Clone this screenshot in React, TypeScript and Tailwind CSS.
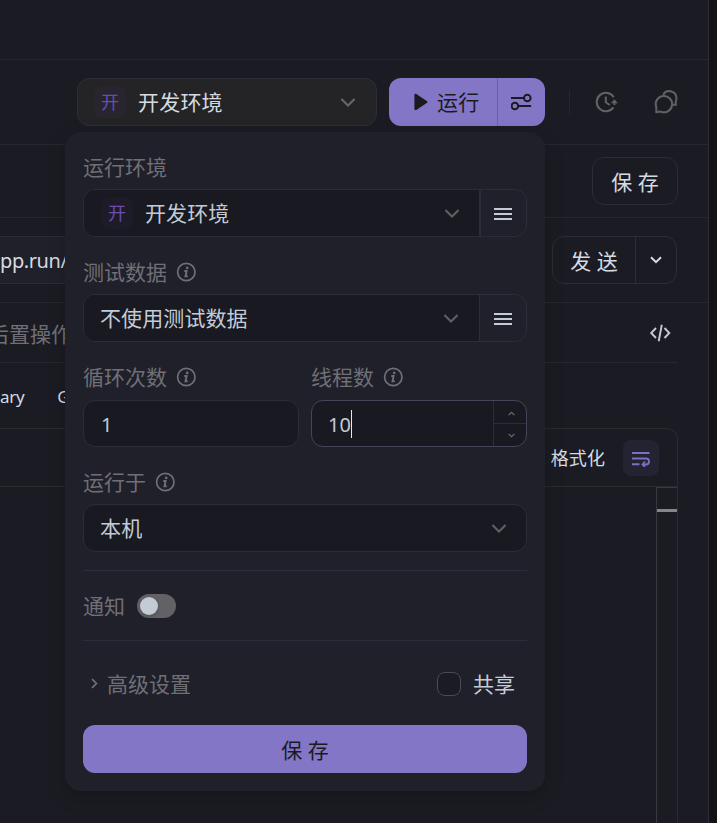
import type { ReactNode } from "react";

function ChevronDown({ className = "" }: { className?: string }) {
  return (
    <svg
      viewBox="0 0 16 10"
      fill="none"
      stroke="currentColor"
      strokeWidth={2.3}
      overflow="visible"
      className={className}
    >
      <path d="M.5 1l7.500 7.500L15.500 1" />
    </svg>
  );
}

function SmallChevron({ className = "" }: { className?: string }) {
  return (
    <svg viewBox="0 0 12 8" fill="none" stroke="currentColor" strokeWidth={2} className={className}>
      <path d="M1 1.200l5 5 5-5" />
    </svg>
  );
}

function InfoIcon() {
  return (
    <svg viewBox="0 0 20 20" fill="none" className="w-5 h-5 text-[#6f6f75]">
      <circle cx="10.3" cy="10" r="8.7" stroke="currentColor" strokeWidth={1.7} />
      <circle cx="11.2" cy="5.9" r="1.3" fill="currentColor" />
      <path d="M8.300 9h2.300L9.500 14.200h2.200" stroke="currentColor" strokeWidth={1.9} />
    </svg>
  );
}

function MenuIcon() {
  return (
    <svg viewBox="0 0 18 12" fill="currentColor" className="w-[18px] h-3 mt-0.5">
      <rect width="18" height="2" />
      <rect y="5" width="18" height="2" />
      <rect y="10" width="18" height="2" />
    </svg>
  );
}

function Label({ children, info }: { children: ReactNode; info?: boolean }) {
  return (
    <div className="flex items-center gap-[9px] h-[42px] pb-0.5 text-[#6f6f75]">
      <span>{children}</span>
      {info && <InfoIcon />}
    </div>
  );
}

function EnvBadge({ className = "" }: { className?: string }) {
  return (
    <span className={`flex items-center justify-center w-8 h-8 rounded-lg text-lg text-[#6a4bb0] ${className}`}>
      开
    </span>
  );
}

function MenuButton({ className = "" }: { className?: string }) {
  return (
    <button
      className={`flex items-center justify-center w-[47px] border-[#2d2d39] text-[#c3ccd6] ${className}`}
    >
      <MenuIcon />
    </button>
  );
}

function RunPanel() {
  return (
    <div className="absolute left-[65px] top-[132px] w-[480px] h-[659px] px-[18px] pt-[15px] rounded-2xl bg-[#20202a] shadow-[0_6px_20px_rgba(0,0,0,0.2)]">
      <Label>运行环境</Label>
      <div className="flex h-12 border border-[#2d2d39] rounded-xl overflow-hidden">
        <div className="flex-1 flex items-center bg-[#191921] pl-[17px] pr-5">
          <EnvBadge className="bg-[#1d1b28]" />
          <span className="ml-3 text-[#c3ccd6] tracking-[0.1px]">开发环境</span>
          <ChevronDown className="ml-auto w-3.5 h-[9px] text-[#5f5f66]" />
        </div>
        <MenuButton className="border-l-2 pr-0.5" />
      </div>

      <div className="mt-[15px]">
        <Label info>测试数据</Label>
        <div className="flex h-12 border border-[#2d2d39] rounded-xl overflow-hidden">
          <div className="flex-1 flex items-center bg-[#191921] pl-4 pr-[21px]">
            <span className="text-[#c3ccd6] tracking-[0.1px]">不使用测试数据</span>
            <ChevronDown className="ml-auto w-3.5 h-[9px] text-[#5f5f66]" />
          </div>
          <MenuButton className="border-l" />
        </div>
      </div>

      <div className="flex gap-3 mt-[15px]">
        <div className="w-[216px]">
          <Label info>循环次数</Label>
          <div className="flex items-center h-[47px] mt-px pl-[17px] pt-0.5 border border-[#2d2d39] rounded-xl bg-[#191921] text-xl text-[#c3ccd6]">
            1
          </div>
        </div>
        <div className="w-[216px]">
          <Label info>线程数</Label>
          <div className="flex h-[47px] mt-px border border-[#45455a] rounded-xl bg-[#191921] overflow-hidden">
            <div className="flex-1 flex items-center pl-4 text-xl text-[#c3ccd6]">
              <span className="pt-0.5">10</span>
              <span className="w-px h-7 bg-[#e4e8ec]" />
            </div>
            <div className="flex flex-col w-[33px] border-l border-[#2d2d39] text-[#6a6a70]">
              <div className="h-[23px] flex items-center justify-center pt-0.5 pl-0.5 border-b border-[#2d2d39]">
                <SmallChevron className="w-[7px] h-[5px] rotate-180" />
              </div>
              <div className="flex-1 flex items-center justify-center pl-0.5">
                <SmallChevron className="w-[7px] h-[5px]" />
              </div>
            </div>
          </div>
        </div>
      </div>

      <div className="mt-[15px]">
        <Label info>运行于</Label>
        <div className="flex items-center h-12 pl-4 pr-5 border border-[#2d2d39] rounded-xl bg-[#191921] text-[#c3ccd6]">
          <span className="tracking-[0.2px]">本机</span>
          <ChevronDown className="ml-auto w-3.5 h-[9px] text-[#5f5f66]" />
        </div>
      </div>

      <div className="flex items-center gap-3 h-[71px] mt-[18px] border-y border-[#2d2d39] text-[#6f6f75]">
        通知
        <span className="flex items-center w-[39px] h-6 px-[3px] rounded-full bg-[#626266]">
          <span className="w-[18px] h-[18px] rounded-full bg-[#c3ccd6] shadow-[0_2px_4px_rgba(0,35,11,0.2)]" />
        </span>
      </div>

      <div className="flex items-center h-[84px] pt-0.5">
        <SmallChevron className="w-[11px] h-[7px] ml-1.5 mb-0.5 -rotate-90 text-[#6f6f75]" />
        <span className="ml-[7px] text-[#6f6f75]">高级设置</span>
        <span className="ml-auto w-6 h-6 border border-[#4a4a5c] rounded-lg bg-[#1b1b23]" />
        <span className="mx-3 text-[#c3ccd6]">共享</span>
      </div>

      <button className="w-full h-12 pt-0.5 rounded-xl bg-[#8376c6] text-[#1b1b1f]">保 存</button>
    </div>
  );
}

function Toolbar() {
  return (
    <div className="flex items-center h-[85px] pl-[77px] border-b border-[#272731]">
      <div className="flex items-center w-[300px] h-12 pl-4 pr-[21px] border border-[#2d2d39] rounded-xl bg-[#242427]">
        <EnvBadge className="bg-[#28252f]" />
        <span className="ml-3 tracking-[0.2px]">开发环境</span>
        <ChevronDown className="ml-auto w-3.5 h-[9px] text-[#66666b]" />
      </div>
      <div className="flex h-12 ml-3 rounded-xl bg-[#8376c6] text-[#1b1b1f]">
        <button className="flex items-center w-[108px] pl-[25px]">
          <svg viewBox="0 0 14 18" fill="currentColor" className="w-3.5 h-[18px]">
            <path d="M.4 2.200C.4.800 1.600.400 2.700 1.200l10 6.700c1 .7 1 1.500 0 2.200l-10 6.700C1.600 17.600.4 17.200.4 15.800z" />
          </svg>
          <span className="ml-[9px] tracking-[0.2px]">运行</span>
        </button>
        <button className="flex items-center justify-center w-12 border-l border-[#6c61a8]">
          <svg viewBox="0 0 21 18" fill="none" stroke="currentColor" strokeWidth={2} className="w-[21px] h-[18px]">
            <circle cx="16.300" cy="5" r="3.300" />
            <circle cx="3.900" cy="13" r="3.300" />
            <path d="M0 5h13M7.200 13h12.900" />
          </svg>
        </button>
      </div>
      <span className="w-px h-6 ml-6 bg-[#272731]" />
      {/* Run history */}
      <svg viewBox="0 0 24 24" fill="none" stroke="#616166" strokeWidth={2} className="w-6 h-6 ml-6">
        <path d="M19.800 7.300A9.200 9.200 0 1 0 19.400 17.400" />
        <path d="M11.800 6.500v5.800l3.900 2.700" />
        <path d="M20.400 15V12" />
        <path d="M16.900 13.300L20.400 9.200l3.500 4.100z" fill="#616166" stroke="none" />
      </svg>
      {/* Comments */}
      <svg
        viewBox="0 0 24 24"
        fill="none"
        stroke="#616166"
        strokeWidth={2}
        strokeLinejoin="round"
        className="w-6 h-6 ml-9"
      >
        <path d="M2.300 22.300v-5.200A8.200 8.200 0 1 1 6.600 21.600z" />
        <path d="M9.200 4.700A7.100 7.100 0 0 1 22.400 8.800c0 1.400-.4 2.500-.8 3.300l.3 2.700h-3" />
      </svg>
    </div>
  );
}

export default function App() {
  return (
    <div
      lang="zh-CN"
      className="relative flex w-[717px] h-[823px] overflow-hidden bg-[#141417] text-[21px] leading-7 whitespace-nowrap font-['Noto_Sans','Noto_Sans_CJK_SC',sans-serif]"
    >
      <div className="flex flex-col w-[709px] border-r border-[#2d2d39] bg-[#1b1b23] text-[#d5dbe1]">
        <div className="h-[60px] border-b border-[#272731]" />
        <Toolbar />

        <div className="flex items-center justify-end h-[73px] pr-[30px] border-b border-[#272731]">
          <button className="w-[86px] h-12 pt-0.5 border border-[#2d2d39] rounded-xl">保 存</button>
        </div>

        <div className="flex items-center justify-between h-[85px] pr-[31px] border-b border-[#272731]">
          <div className="flex items-center w-[400px] h-12 pt-0.5 border-y border-[#2d2d39] bg-[#20202a] text-xl tracking-[-0.4px]">
            pp.run/
          </div>
          <div className="flex w-[125px] h-12 border border-[#2d2d39] rounded-xl">
            <button className="w-[82px] pt-0.5">发 送</button>
            <button className="flex-1 flex items-center justify-center border-l border-[#2d2d39]">
              <SmallChevron className="w-3 h-2" />
            </button>
          </div>
        </div>

        <div className="flex items-center justify-between h-[60px] mr-[30px] pr-[7px] border-b border-[#272731]">
          <span className="-ml-3 pt-0.5 text-[#6f6f75]">后置操作</span>
          <svg viewBox="0 0 22 18" fill="none" stroke="#c3ccd6" strokeWidth={1.9} className="w-[22px] h-[18px]">
            <path d="M7 4L2.200 9 7 14M15.500 4l4.800 5-4.800 5M12.800.800L9.700 17.200" />
          </svg>
        </div>

        <div className="flex items-center gap-[33px] h-[65px] pt-0.5 text-[17px] tracking-[-0.3px]">
          <span>ary</span>
          <span>G</span>
        </div>

        <div className="flex-1 flex flex-col mr-[30px] border-t border-r border-[#2a2a30] rounded-tr-xl">
          <div className="flex items-center justify-end h-[58px] pr-[18px] border-b border-[#2a2a30] text-lg">
            <span className="tracking-[0.1px]">格式化</span>
            <span className="flex items-center justify-center w-9 h-9 ml-[18px] rounded-lg bg-[#242331]">
              <svg viewBox="0 0 18 16" fill="none" stroke="#7c6fc0" strokeWidth={1.900} className="w-[18px] h-4 mt-0.5">
                <path d="M0 2h17.500M0 7.500h14a3 3 0 0 1 0 6h-3M0 13.200h7.500" />
                <path d="M13 10.500l-2.500 3 2.500 2.500" />
              </svg>
            </span>
          </div>
          <div className="flex-1 flex justify-end">
            <div className="w-[21px] pt-[21px] border-l border-t border-[#38383d]">
              <div className="h-[3px] bg-[#85858a]" />
            </div>
          </div>
        </div>
      </div>

      <RunPanel />
    </div>
  );
}
